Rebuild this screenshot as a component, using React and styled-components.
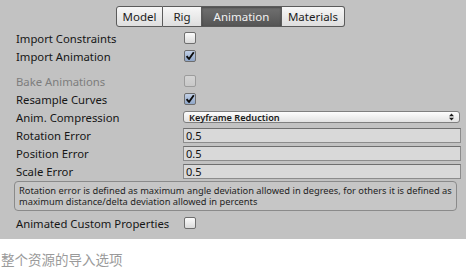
import styled, { createGlobalStyle } from 'styled-components';

const GlobalStyle = createGlobalStyle`
  html, body {
    margin: 0;
    padding: 0;
    background: #ffffff;
  }
  body {
    font-family: "Noto Sans", "Liberation Sans", sans-serif;
  }
`;

const Page = styled.div`
  width: 466px;
  height: 271px;
  display: flex;
  flex-direction: column;
`;

const Inspector = styled.div`
  background: #c2c2c2;
  padding: 6px 0 7px;
  display: flex;
  flex-direction: column;
`;

const TabBar = styled.div`
  display: flex;
  justify-content: center;
  margin: 0 0 2px 0;
  padding-right: 5px;
`;

const Tab = styled.div`
  height: 21px;
  width: ${(p) => p.$w}px;
  box-sizing: border-box;
  display: flex;
  align-items: center;
  justify-content: center;
  font-size: 11.5px;
  color: ${(p) => (p.$active ? '#f2f2f2' : '#1c1c1c')};
  background: ${(p) =>
    p.$active
      ? 'linear-gradient(#707070, #555555)'
      : 'linear-gradient(#f7f7f7, #dedede)'};
  border: 1px solid #5b5b5b;
  border-left: none;
  &:first-child {
    border-left: 1px solid #5b5b5b;
    border-radius: 3px 0 0 3px;
  }
  &:last-child {
    border-radius: 0 3px 3px 0;
  }
  box-shadow: ${(p) => (p.$active ? 'inset 0 1px 2px rgba(0,0,0,0.35)' : 'none')};
`;

const Rows = styled.div`
  display: flex;
  flex-direction: column;
  padding: 0 5px 0 16px;
`;

const Row = styled.div`
  display: grid;
  grid-template-columns: 167px 1fr;
  align-items: center;
  height: 18px;
  margin-top: ${(p) => p.$gap || 0}px;
`;

const Label = styled.div`
  font-size: 11.3px;
  color: ${(p) => (p.$disabled ? '#7d7d7d' : '#161616')};
  white-space: nowrap;
`;

const Checkbox = styled.div`
  width: 12px;
  height: 12px;
  margin-left: 1px;
  box-sizing: border-box;
  border-radius: 2px;
  border: 1px solid ${(p) => (p.$disabled ? '#9c9c9c' : '#6e6e6e')};
  background: ${(p) =>
    p.$checked
      ? 'linear-gradient(#c2d0e6, #8fa6c8)'
      : p.$disabled
      ? 'linear-gradient(#d4d4d4, #c8c8c8)'
      : 'linear-gradient(#fbfbfb, #dadada)'};
  display: flex;
  align-items: center;
  justify-content: center;
`;

const Select = styled.div`
  height: 12px;
  box-sizing: border-box;
  border: 1px solid #7f7f7f;
  border-radius: 3px;
  background: linear-gradient(#fdfdfd, #e2e2e2);
  display: flex;
  align-items: center;
  justify-content: space-between;
  padding: 0 5px 0 5px;
  margin-right: 1px;
  font-size: 9.2px;
  font-weight: 600;
  color: #1a1a1a;
`;

const Field = styled.div`
  height: 15px;
  box-sizing: border-box;
  border: 1px solid #8c8c8c;
  border-top-color: #6f6f6f;
  background: #d9d9d9;
  font-size: 11px;
  color: #111;
  display: flex;
  align-items: center;
  padding-left: 2px;
`;

const HelpBox = styled.div`
  margin: 1px 4px 3px -2px;
  height: 30px;
  box-sizing: border-box;
  border: 1px solid #8a8a8a;
  border-radius: 4px;
  background: #c6c6c6;
  padding: 3px 4px 0 4px;
  font-size: 9.3px;
  line-height: 11px;
  color: #1e1e1e;
`;

const Caption = styled.div`
  padding: 10px 0 0 1px;
  font-family: "Noto Sans CJK SC", "Noto Sans", sans-serif;
  font-size: 13.5px;
  color: #9a9a9a;
`;

function Check({ checked, disabled }) {
  return (
    <Checkbox $checked={checked} $disabled={disabled}>
      {checked && (
        <svg width="10" height="10" viewBox="0 0 10 10">
          <path d="M1.6 5.2 L4 8 L8.8 1.2" fill="none" stroke="#0c0c0c" strokeWidth="1.9" strokeLinejoin="round" />
        </svg>
      )}
    </Checkbox>
  );
}

function UpDown() {
  return (
    <svg width="5" height="8" viewBox="0 0 5 8">
      <path d="M0 3.3 L2.5 0.5 L5 3.3 Z M0 4.7 L2.5 7.5 L5 4.7 Z" fill="#1a1a1a" />
    </svg>
  );
}

const tabs = [
  { name: 'Model', w: 47 },
  { name: 'Rig', w: 39 },
  { name: 'Animation', w: 80, active: true },
  { name: 'Materials', w: 63 },
];

export default function App() {
  return (
    <Page>
      <GlobalStyle />
      <Inspector>
        <TabBar>
          {tabs.map((t) => (
            <Tab key={t.name} $w={t.w} $active={t.active}>
              {t.name}
            </Tab>
          ))}
        </TabBar>
        <Rows>
          <Row>
            <Label>Import Constraints</Label>
            <Check />
          </Row>
          <Row>
            <Label>Import Animation</Label>
            <Check checked />
          </Row>
          <Row $gap={7}>
            <Label $disabled>Bake Animations</Label>
            <Check disabled />
          </Row>
          <Row>
            <Label>Resample Curves</Label>
            <Check checked />
          </Row>
          <Row>
            <Label>Anim. Compression</Label>
            <Select>
              <span>Keyframe Reduction</span>
              <UpDown />
            </Select>
          </Row>
          <Row>
            <Label>Rotation Error</Label>
            <Field>0.5</Field>
          </Row>
          <Row>
            <Label>Position Error</Label>
            <Field>0.5</Field>
          </Row>
          <Row>
            <Label>Scale Error</Label>
            <Field>0.5</Field>
          </Row>
          <HelpBox>
            Rotation error is defined as maximum angle deviation allowed in degrees, for others it is defined as
            maximum distance/delta deviation allowed in percents
          </HelpBox>
          <Row>
            <Label>Animated Custom Properties</Label>
            <Check />
          </Row>
        </Rows>
      </Inspector>
      <Caption>整个资源的导入选项</Caption>
    </Page>
  );
}
